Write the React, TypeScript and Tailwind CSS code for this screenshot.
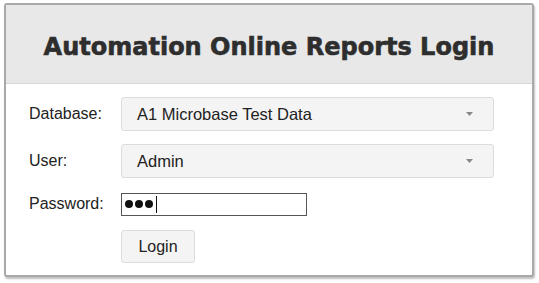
function Caret() {
  return (
    <svg width="7" height="4" viewBox="0 0 7 4" className="text-[#888]">
      <path d="M0 0h7L3.5 4z" fill="currentColor" />
    </svg>
  );
}

function SelectBox({ value }: { value: string }) {
  return (
    <div className="flex h-[34px] w-[373px] items-center justify-between rounded-[3px] border border-[#dcdcdc] bg-[#f4f4f4] pl-[15px] pr-[20px] text-[16.5px] text-[#222]">
      <span>{value}</span>
      <Caret />
    </div>
  );
}

export default function App() {
  return (
    <div className="h-[283px] w-[539px] bg-white pl-[4px] pt-[3px] font-['Liberation_Sans',Arial,sans-serif]">
      <div className="h-[274px] w-[530px] overflow-hidden rounded-[3px] border-2 border-[#a9a9a9] bg-white shadow-[1px_2px_2px_rgba(0,0,0,0.25)]">
        {/* Header */}
        <div className="flex h-[79px] items-center justify-center border-b border-[#d6d6d6] bg-[#e8e8e8] pt-[5px]">
          <h1 className="font-['DejaVu_Sans',Verdana,sans-serif] text-[24px] font-bold text-[#2e2e2e] [-webkit-text-stroke:0.6px_#2e2e2e]">
            Automation Online Reports Login
          </h1>
        </div>

        {/* Form */}
        <div className="flex flex-col gap-[13px] pt-[13px]">
          <div className="flex items-center">
            <label className="w-[115px] pl-[23px] text-[16px] text-[#222]">Database:</label>
            <SelectBox value="A1 Microbase Test Data" />
          </div>
          <div className="flex items-center">
            <label className="w-[115px] pl-[23px] text-[16px] text-[#222]">User:</label>
            <SelectBox value="Admin" />
          </div>
          <div className="mt-px flex items-center">
            <label className="w-[115px] pl-[23px] text-[16px] text-[#222]">Password:</label>
            <div className="flex h-[23px] w-[186px] items-center gap-[2px] border border-[#555] pl-[3px]">
              <span className="h-[8px] w-[8px] rounded-full bg-[#111]" />
              <span className="h-[8px] w-[8px] rounded-full bg-[#111]" />
              <span className="h-[8px] w-[8px] rounded-full bg-[#111]" />
              <span className="ml-px h-[17px] w-px bg-[#111]" />
            </div>
          </div>
          <div className="mt-px flex items-center pl-[115px]">
            <button className="h-[33px] w-[74px] rounded-[3px] border border-[#dcdcdc] bg-[#f4f4f4] text-[16px] text-[#222]">
              Login
            </button>
          </div>
        </div>
      </div>
    </div>
  );
}
